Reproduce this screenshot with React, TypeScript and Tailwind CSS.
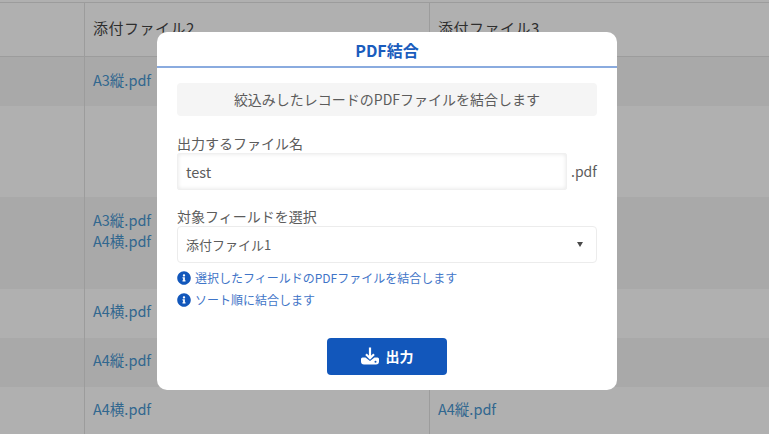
import { FaInfoCircle } from "react-icons/fa";

const font = { fontFamily: '"Noto Sans CJK JP", "Noto Sans", sans-serif' };

function Row({ h, dark, a, b, tight }: { h: string; dark?: boolean; a?: string[]; b?: string; tight?: boolean }) {
  const cell = `${tight ? "pt-[11px]" : "pt-[12px]"} pl-2 text-[14.500px] leading-[21px] text-[#31678f]`;
  return (
    <div className={`flex ${h} ${dark ? "bg-[#a9a9a9]" : "bg-[#b0b0b0]"}`}>
      <div className="w-[85px] shrink-0 border-r border-[#9c9c9c]" />
      <div className={`w-[345px] shrink-0 border-r border-[#9c9c9c] ${cell}`}>
        {(a ?? []).map((t, i) => (
          <div key={i}>{t}</div>
        ))}
      </div>
      <div className={`flex-1 ${cell}`}>{b}</div>
    </div>
  );
}

function Info({ children }: { children: string }) {
  return (
    <div className="flex h-[22px] items-center gap-[4px]">
      <FaInfoCircle size={14} color="#1257bb" className="shrink-0" />
      <span className="text-[12px] leading-none text-[#3f75c8]">{children}</span>
    </div>
  );
}

export default function App() {
  return (
    <div className="relative h-[434px] w-[769px] overflow-hidden bg-[#b0b0b0]" style={font}>
      <div className="flex h-[434px] flex-col">
        <div className="h-[3px] border-b border-[#9c9c9c] bg-[#b0b0b0]" />
        <div className="flex h-[54px] border-b border-[#9c9c9c] bg-[#b0b0b0]">
          <div className="w-[85px] shrink-0 border-r border-[#9c9c9c]" />
          <div className="w-[345px] shrink-0 border-r border-[#9c9c9c] pl-2 pt-[14px] text-[15px] leading-[22px] tracking-[0.5px] text-[#2e2e2e]">
            添付ファイル2
          </div>
          <div className="flex-1 pl-2 pt-[14px] text-[15px] leading-[22px] tracking-[0.5px] text-[#2e2e2e]">添付ファイル3</div>
        </div>
        <Row h="h-[49px]" dark a={["A3縦.pdf"]} />
        <Row h="h-[91px]" />
        <Row h="h-[92px]" dark a={["A3縦.pdf", "A4横.pdf"]} />
        <Row h="h-[49px]" tight a={["A4横.pdf"]} />
        <Row h="h-[49px]" tight dark a={["A4縦.pdf"]} />
        <Row h="h-[47px]" tight a={["A4横.pdf"]} b="A4縦.pdf" />
      </div>

      <div className="absolute left-[157px] top-[32px] flex h-[358px] w-[460px] flex-col rounded-[10px] bg-white">
        <div className="flex h-[36px] shrink-0 items-center justify-center border-b-2 border-[#8aabdf] pt-[1px] text-[16px] font-bold text-[#1a5cbd]">
          PDF結合
        </div>
        <div className="flex flex-1 flex-col px-[20px] pt-[15px]">
          <div className="flex h-[33px] items-center justify-center rounded-[4px] bg-[#f5f5f5] text-[14px] text-[#5c5c5c]">
            絞込みしたレコードのPDFファイルを結合します
          </div>
          <div className="mt-[17px] text-[14px] leading-[20px] text-[#5c5c5c]">出力するファイル名</div>
          <div className="flex items-center">
            <div className="flex h-[37px] w-[390px] shrink-0 items-center rounded-[2px] border border-[#f0f0f0] pl-[8px] text-[14.500px] text-[#5c5c5c] shadow-[inset_0_0_4px_rgba(0,0,0,0.1)]">
              test
            </div>
            <div className="ml-[4px] text-[14px] text-[#5c5c5c]">.pdf</div>
          </div>
          <div className="mt-[16px] text-[14px] leading-[20px] text-[#5c5c5c]">対象フィールドを選択</div>
          <div className="flex h-[37px] items-center justify-between rounded-[4px] border border-[#ececec] pl-[8px] pr-[13px] text-[13px] text-[#5c5c5c]">
            添付ファイル1
            <svg width="6" height="5" viewBox="0 0 6 5">
              <path d="M0 0h6L3 5z" fill="#4a4a4a" />
            </svg>
          </div>
          <div className="mt-[4px]">
            <Info>選択したフィールドのPDFファイルを結合します</Info>
            <Info>ソート順に結合します</Info>
          </div>
          <div className="mt-[27px] flex justify-center">
            <div className="flex h-[37px] w-[120px] items-center justify-center gap-[7px] rounded-[4px] bg-[#1257bb] text-[14px] font-bold text-white">
              <svg width="18" height="18" viewBox="0 0 18 18" fill="none" className="-translate-y-[1px]">
                <path d="M9 0.500V11M5 7.200l4 4 4-4" stroke="#fff" strokeWidth="2.200" />
                <path d="M1.500 10.500h3l4.500 3.600 4.500-3.600h3a1.500 1.500 0 0 1 1.500 1.500v2.500a3 3 0 0 1-3 3H3a3 3 0 0 1-3-3V12a1.500 1.500 0 0 1 1.500-1.500z" fill="#fff" />
                <circle cx="14.500" cy="14.700" r="1" fill="#1257bb" />
              </svg>
              出力
            </div>
          </div>
        </div>
      </div>
    </div>
  );
}
